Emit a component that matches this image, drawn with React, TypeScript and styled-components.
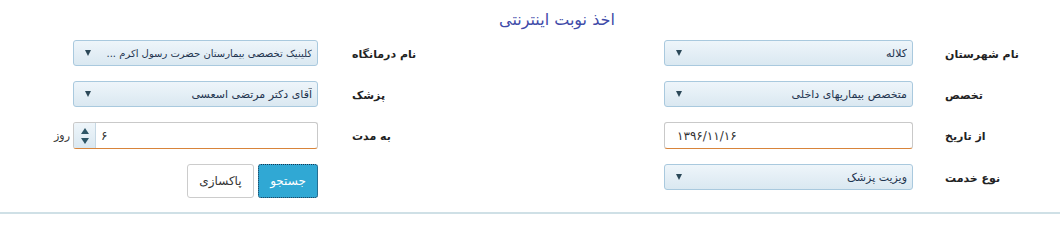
import React from "react";
import styled, { createGlobalStyle } from "styled-components";

const GlobalStyle = createGlobalStyle`
  html, body { margin: 0; padding: 0; background: #ffffff; }
  body { font-family: "DejaVu Sans", "Noto Sans", sans-serif; }
`;

const Page = styled.div`
  width: 1060px;
  height: 214px;
  box-sizing: border-box;
  border-bottom: 2px solid #cfe0e6;
  direction: rtl;
  display: flex;
  flex-direction: column;
`;

const Title = styled.h1`
  margin: 0;
  height: 40px;
  box-sizing: border-box;
  padding: 9px 0 0 54px;
  text-align: center;
  font-size: 16px;
  line-height: 22px;
  font-weight: normal;
  color: #3e4aa8;
`;

const Form = styled.div`
  display: grid;
  grid-template-columns: 147px 249px 346px 245px 1fr;
  grid-template-rows: 26px 26px 27px auto;
  row-gap: 15px;
  align-items: start;
`;

const Label = styled.div<{ $pad: number }>`
  height: 26px;
  box-sizing: border-box;
  padding-left: ${(p) => p.$pad}px;
  padding-top: 3px;
  text-align: left;
  font-size: 11px;
  font-weight: bold;
  color: #222;
  line-height: 24px;
  white-space: nowrap;
`;

const Select = styled.div`
  height: 26px;
  box-sizing: border-box;
  border: 1px solid #a9c9de;
  border-radius: 3px;
  background: linear-gradient(#eef5fa, #dae8f1);
  display: flex;
  align-items: center;
  padding: 0 5px 0 11px;
  gap: 10px;
  color: #1f3550;
  overflow: hidden;
`;

const SelectValue = styled.span<{ $size: number }>`
  flex: 1;
  font-size: ${(p) => p.$size}px;
  white-space: nowrap;
  overflow: hidden;
  text-align: right;
`;

const Arrow = styled.span`
  flex: none;
  width: 0;
  height: 0;
  border-left: 3.5px solid transparent;
  border-right: 3.5px solid transparent;
  border-top: 6px solid #2b4858;
`;

const TextInput = styled.input`
  display: block;
  width: 100%;
  height: 27px;
  box-sizing: border-box;
  border: 1px solid #c9c9c9;
  border-bottom: 1px solid #d8843a;
  border-radius: 3px;
  background: #fff;
  direction: ltr;
  text-align: left;
  padding: 0 12px;
  font-family: "DejaVu Sans", sans-serif;
  font-size: 12px;
  letter-spacing: 1px;
  color: #333;
  outline: none;
`;

const NumberField = styled.div`
  height: 27px;
  box-sizing: border-box;
  border: 1px solid #c9c9c9;
  border-bottom: 1px solid #d8843a;
  border-radius: 3px;
  background: #fff;
  display: flex;
  overflow: hidden;
`;

const NumberValue = styled.input`
  flex: 1;
  min-width: 0;
  border: none;
  outline: none;
  background: transparent;
  direction: rtl;
  text-align: left;
  padding: 0 5px;
  font-family: "DejaVu Sans", sans-serif;
  font-size: 12px;
  color: #333;
`;

const Spinner = styled.div`
  flex: none;
  width: 21px;
  background: linear-gradient(#eef5fa, #dae8f1);
  border-right: 1px solid #c6d8e4;
  display: flex;
  flex-direction: column;
  align-items: center;
  justify-content: center;
  gap: 4px;
`;

const Tri = styled.span<{ $up?: boolean }>`
  width: 0;
  height: 0;
  border-left: 4px solid transparent;
  border-right: 4px solid transparent;
  ${(p) =>
    p.$up
      ? "border-bottom: 6px solid #2d5566;"
      : "border-top: 6px solid #2d5566;"}
`;

const Suffix = styled.div`
  padding-right: 3px;
  line-height: 27px;
  font-size: 11px;
  color: #333;
  white-space: nowrap;
`;

const Buttons = styled.div`
  display: flex;
  gap: 4px;
`;

const Button = styled.button<{ $primary?: boolean }>`
  height: 34px;
  box-sizing: border-box;
  border-radius: 3px;
  font-family: "DejaVu Sans", sans-serif;
  font-size: 12px;
  cursor: pointer;
  padding: 0;
  ${(p) =>
    p.$primary
      ? `
    width: 60px;
    background: #30a8d4;
    color: #fff;
    border: 1px dotted #1b3550;
  `
      : `
    width: 67px;
    background: #fff;
    color: #333;
    border: 1px solid #cccccc;
  `}
`;

const Empty = styled.div``;

function SelectBox({ value, size = 11 }: { value: string; size?: number }) {
  return (
    <Select>
      <SelectValue $size={size}>{value}</SelectValue>
      <Arrow />
    </Select>
  );
}

export default function App() {
  return (
    <>
      <GlobalStyle />
      <Page>
        <Title>اخذ نوبت اینترنتی</Title>
        <Form>
          <Label $pad={32}>نام شهرستان</Label>
          <SelectBox value="کلاله" />
          <Label $pad={34}>نام درمانگاه</Label>
          <SelectBox value="کلینیک تخصصی بیمارستان حضرت رسول اکرم ..." size={10} />
          <Empty />

          <Label $pad={32}>تخصص</Label>
          <SelectBox value="متخصص بیماریهای داخلی" />
          <Label $pad={34}>پزشک</Label>
          <SelectBox value="آقای دکتر مرتضی اسعسی" />
          <Empty />

          <Label $pad={32}>از تاریخ</Label>
          <TextInput defaultValue="۱۳۹۶/۱۱/۱۶" />
          <Label $pad={34}>به مدت</Label>
          <NumberField>
            <NumberValue defaultValue="۶" />
            <Spinner>
              <Tri $up />
              <Tri />
            </Spinner>
          </NumberField>
          <Suffix>روز</Suffix>

          <Label $pad={32}>نوع خدمت</Label>
          <SelectBox value="ویزیت پزشک" />
          <Empty />
          <Buttons>
            <Button $primary>جستجو</Button>
            <Button>پاکسازی</Button>
          </Buttons>
          <Empty />
        </Form>
      </Page>
    </>
  );
}
